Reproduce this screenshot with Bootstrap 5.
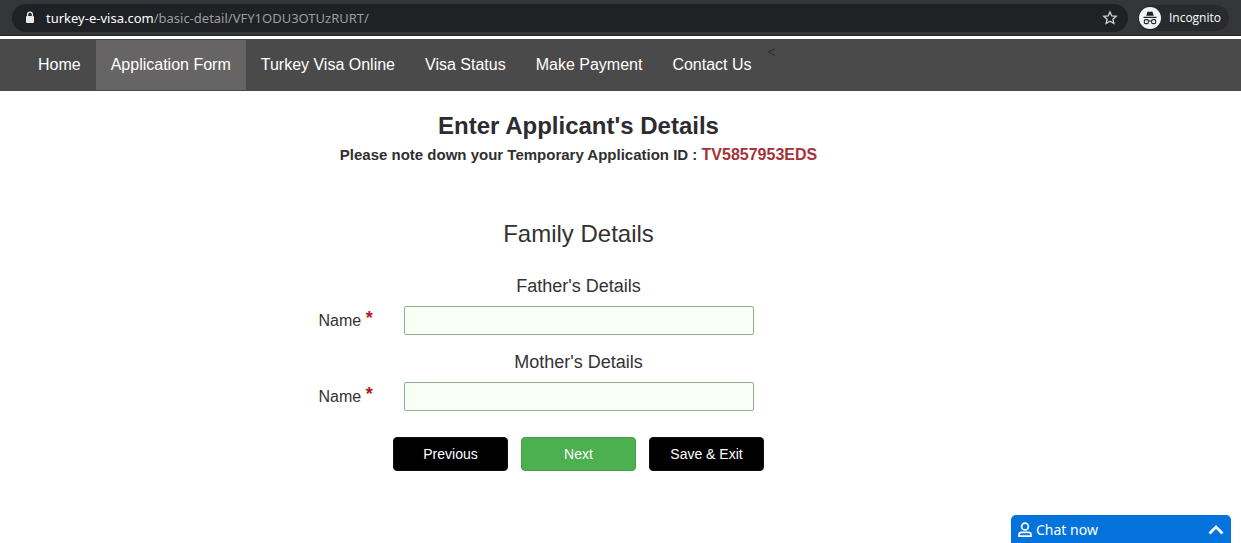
<!DOCTYPE html>
<html lang="en">
<head>
<meta charset="utf-8">
<meta name="viewport" content="width=device-width, initial-scale=1">
<title>Turkey e-Visa - Applicant's Details</title>
<link href="https://cdn.jsdelivr.net/npm/bootstrap@5.3.0/dist/css/bootstrap.min.css" rel="stylesheet">
<style>
  body { font-family: "Liberation Sans", Arial, sans-serif; font-size: 16px; line-height: 24px; color: #333; background: #fff; }
  .browser-bar { height: 36px; padding: 0 12px; gap: 10px; background: #35363a; border-bottom: 1px solid #242529; font-family: "Noto Sans", "Open Sans", sans-serif; color: #fff; }
  .address { height: 28px; padding: 0 10px 0 12px; background: #202124; font-size: 13px; line-height: 20px; }
  .address a { margin-left: 10px; color: #fff; }
  .address .path { color: #9a9da1; }
  .profile { height: 26px; padding: 0 8px 0 1px; gap: 8px; background: #292a2d; font-family: "Open Sans", "Noto Sans", sans-serif; font-size: 12px; line-height: 20px; }
  .icon-btn { line-height: 0; }
  .site-nav { margin-top: 3px; padding: 1px 23px; background: #4a4a4a; }
  .site-nav .nav-link { padding: 13px 15px; color: #fff; }
  .site-nav .nav-link.active { background: #666465; }
  .stray { padding-left: 1px; font-size: 14px; color: #303030; }
  .page-main { padding: 22px 84px 48px 0; }
  .page-title { font-size: 24px; line-height: 26px; font-weight: 700; color: #2b2b30; }
  .note { font-size: 15px; line-height: 32px; font-weight: 700; color: #2f2f2f; }
  .note .app-id { font-size: 16px; color: #a23336; }
  .section-title { margin: 49px 0 0; font-size: 24px; line-height: 28px; font-weight: 400; }
  .sub-title { font-size: 18px; line-height: 20px; font-weight: 400; }
  .detail-form { padding-top: 28px; }
  .field-row { display: grid; grid-template-columns: 85px minmax(0, 350px) 85px; justify-content: center; align-items: center; margin: 10px 0 17px; }
  .field-row .form-control { height: 29px; padding: 3px 8px; border: 1px solid #8fb08f; border-radius: 2px; background: #f8fff6; }
  .req { color: #b3191d; font-size: 18px; font-weight: 700; line-height: 0; vertical-align: 2px; }
  .actions { gap: 13px; padding-top: 9px; }
  .actions .btn { width: 115px; height: 34px; padding: 6px 8px; border-radius: 4px; font-size: 14px; line-height: 20px; color: #fff; }
  .btn-plain { background: #000; border-color: #111; }
  .btn-next { background: #4caf50; border-color: #46a04a; }
  .chat-tab { right: 10px; width: 220px; height: 28px; padding: 2px 7px 0; border: 0; border-radius: 5px 5px 0 0; background: #0474dc; color: #fff; font-family: "Noto Sans", "Open Sans", sans-serif; font-size: 14px; line-height: 24px; }
</style>
<script src="https://cdn.jsdelivr.net/npm/bootstrap@5.3.0/dist/js/bootstrap.bundle.min.js"></script>
</head>
<body>
<header>
  <div class="browser-bar d-flex align-items-center">
    <div class="address d-flex flex-grow-1 align-items-center rounded-pill">
      <svg width="12" height="14" viewBox="0 0 12 14" aria-hidden="true"><rect x="2" y="5" width="8" height="7" rx="1" fill="#e8eaed"/><path d="M3.6 5.500V3.500a2.400 2.400 0 0 1 4.800 0v2" fill="none" stroke="#e8eaed" stroke-width="1.300"/></svg>
      <a href="#" class="me-auto text-decoration-none">turkey-e-visa.com<span class="path">/basic-detail/VFY1ODU3OTUzRURT/</span></a>
      <button type="button" class="icon-btn border-0 bg-transparent p-0" aria-label="Bookmark this page"><svg width="16" height="16" viewBox="0 0 16 16"><path d="M8 1.9l1.8 4 4.4.4-3.3 2.9 1 4.3L8 11.2l-3.9 2.3 1-4.3-3.3-2.9 4.4-.4z" fill="none" stroke="#d0d2d6" stroke-width="1.3" stroke-linejoin="miter"/></svg></button>
    </div>
    <div class="profile d-flex align-items-center rounded-pill">
      <svg width="22" height="22" viewBox="0 0 22 22" aria-hidden="true"><circle cx="11" cy="11" r="11" fill="#f1f3f4"/><path d="M7.2 8.7l1.2-3.6q.2-.7.9-.5l1.7.4 1.7-.4q.7-.2.9.5l1.2 3.6zM4.5 9.8h13v1.1h-13z" fill="#202124"/><g fill="none" stroke="#202124" stroke-width="1.1"><rect x="5.3" y="12.6" width="4.1" height="4" rx="1.4"/><rect x="12.6" y="12.6" width="4.1" height="4" rx="1.4"/><path d="M9.4 14.2q1.6-.8 3.2 0"/></g></svg>
      <span>Incognito</span>
    </div>
  </div>
  <nav class="site-nav d-flex align-items-start">
    <ul class="nav">
      <li class="nav-item"><a class="nav-link" href="#">Home</a></li>
      <li class="nav-item"><a class="nav-link active" aria-current="page" href="#">Application Form</a></li>
      <li class="nav-item"><a class="nav-link" href="#">Turkey Visa Online</a></li>
      <li class="nav-item"><a class="nav-link" href="#">Visa Status</a></li>
      <li class="nav-item"><a class="nav-link" href="#">Make Payment</a></li>
      <li class="nav-item"><a class="nav-link" href="#">Contact Us</a></li>
    </ul>
    <span class="stray">&lt;</span>
  </nav>
</header>
<main class="page-main text-center">
  <h1 class="page-title mb-0">Enter Applicant's Details</h1>
  <p class="note mb-0">Please note down your Temporary Application ID : <span class="app-id">TV5857953EDS</span></p>
  <h2 class="section-title">Family Details</h2>
  <form class="detail-form">
    <h3 class="sub-title mb-0">Father's Details</h3>
    <div class="field-row">
      <label class="text-start" for="father">Name <span class="req">*</span></label>
      <input class="form-control" type="text" id="father" required>
    </div>
    <h3 class="sub-title mb-0">Mother's Details</h3>
    <div class="field-row">
      <label class="text-start" for="mother">Name <span class="req">*</span></label>
      <input class="form-control" type="text" id="mother" required>
    </div>
    <div class="actions d-flex justify-content-center">
      <button type="button" class="btn btn-plain">Previous</button>
      <button type="submit" class="btn btn-next">Next</button>
      <button type="button" class="btn btn-plain">Save &amp; Exit</button>
    </div>
  </form>
</main>
<button type="button" class="chat-tab position-fixed bottom-0 d-flex align-items-center">
  <svg width="14" height="16" viewBox="0 0 14 16" aria-hidden="true"><g fill="none" stroke="#fff" stroke-width="1.7"><circle cx="7" cy="4.5" r="3.4"/><path d="M1 14.2v-1.5q0-2.4 2.6-2.4h6.8q2.6 0 2.6 2.4v1.5z"/></g></svg>
  <span class="ms-1 me-auto">Chat now</span>
  <svg width="16" height="10" viewBox="0 0 16 10" aria-hidden="true"><path d="M1.5 8.5L8 2l6.5 6.5" fill="none" stroke="#fff" stroke-width="2.8"/></svg>
</button>
</body>
</html>
